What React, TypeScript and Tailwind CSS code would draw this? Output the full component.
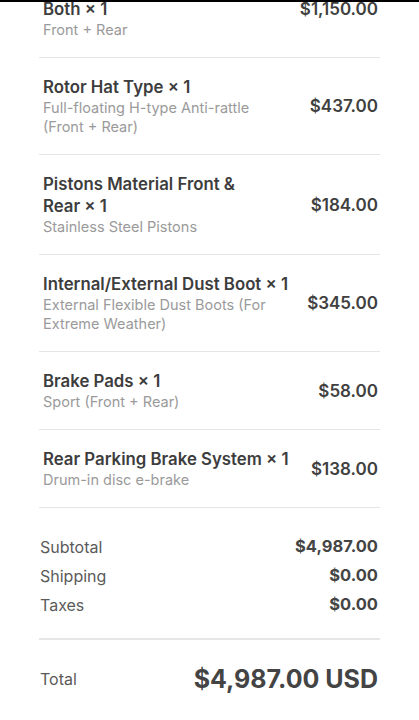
import React from "react";

type Item = { title: string; sub: string; price: string; top?: boolean };

const items: Item[] = [
  { title: "Both\u00a0×\u00a01", sub: "Front + Rear", price: "$1,150.00", top: true },
  { title: "Rotor Hat Type\u00a0×\u00a01", sub: "Full-floating H-type Anti-rattle (Front + Rear)", price: "$437.00" },
  { title: "Pistons Material Front & Rear\u00a0×\u00a01", sub: "Stainless Steel Pistons", price: "$184.00" },
  { title: "Internal/External Dust Boot\u00a0×\u00a01", sub: "External Flexible Dust Boots (For Extreme Weather)", price: "$345.00" },
  { title: "Brake Pads\u00a0×\u00a01", sub: "Sport (Front + Rear)", price: "$58.00" },
  { title: "Rear Parking Brake System\u00a0×\u00a01", sub: "Drum-in disc e-brake", price: "$138.00" },
];

export default function App() {
  return (
    <div
      className="relative w-[419px] h-[720px] overflow-hidden bg-white"
      style={{ fontFamily: "Inter, 'Liberation Sans', Arial, sans-serif" }}
    >
      <div className="absolute left-0 top-0 h-[2px] w-full bg-black" />
      <div className="px-[39px] -mt-[20px]">
        {items.map((it, i) => (
          <div key={i} className="flex items-center border-b border-[#e5e5e5] py-[18px] pl-[4px] pr-[2px]">
            <div className="w-[253px] shrink-0">
              <div className="text-[16.8px] leading-[22px] font-semibold text-[#3d3d3d]">{it.title}</div>
              <div className="max-w-[232px] text-[14.5px] leading-[19px] text-[#9a9a9a]">{it.sub}</div>
            </div>
            <div
              className={`flex-1 text-right whitespace-nowrap text-[17px] leading-[22px] font-semibold text-[#404040] ${
                it.top ? "self-start" : ""
              }`}
            >
              {it.price}
            </div>
          </div>
        ))}
        <div className="pt-[24px] pb-[19px] border-b-2 border-[#e6e6e6]">
          {[
            ["Subtotal", "$4,987.00"],
            ["Shipping", "$0.00"],
            ["Taxes", "$0.00"],
          ].map(([l, v]) => (
            <div key={l} className="flex items-center justify-between h-[29px] pl-[1px] pr-[2px]">
              <span className="text-[16px] text-[#5a5a5a]">{l}</span>
              <span className="text-[16.5px] font-bold text-[#444]">{v}</span>
            </div>
          ))}
        </div>
        <div className="flex items-center justify-between pt-[23px] pl-[1px] pr-[2px]">
          <span className="text-[16px] text-[#5a5a5a]">Total</span>
          <span className="text-[25px] leading-[32px] font-bold text-[#444]">$4,987.00 USD</span>
        </div>
      </div>
    </div>
  );
}
